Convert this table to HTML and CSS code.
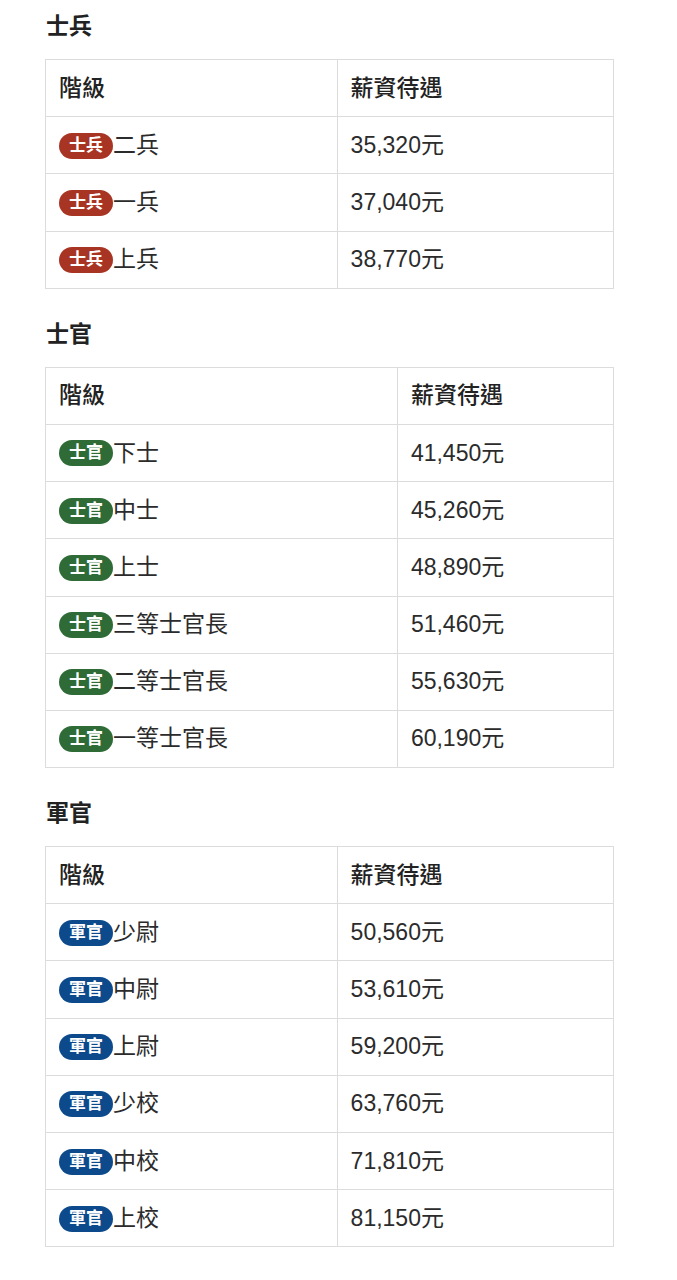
FILE: index.html
```html
<!DOCTYPE html>
<html lang="zh-Hant">
<head>
<meta charset="utf-8">
<title>薪資待遇</title>
<link rel="stylesheet" href="styles.css">
</head>
<body>
<main class="page">
  <section class="group">
    <h2 class="group-title">士兵</h2>
    <table class="pay-table">
      <thead>
        <tr><th>階級</th><th>薪資待遇</th></tr>
      </thead>
      <tbody>
        <tr><td><span class="badge badge-soldier">士兵</span>二兵</td><td>35,320元</td></tr>
        <tr><td><span class="badge badge-soldier">士兵</span>一兵</td><td>37,040元</td></tr>
        <tr><td><span class="badge badge-soldier">士兵</span>上兵</td><td>38,770元</td></tr>
      </tbody>
    </table>
  </section>

  <section class="group">
    <h2 class="group-title">士官</h2>
    <table class="pay-table">
      <thead>
        <tr><th>階級</th><th>薪資待遇</th></tr>
      </thead>
      <tbody>
        <tr><td><span class="badge badge-nco">士官</span>下士</td><td>41,450元</td></tr>
        <tr><td><span class="badge badge-nco">士官</span>中士</td><td>45,260元</td></tr>
        <tr><td><span class="badge badge-nco">士官</span>上士</td><td>48,890元</td></tr>
        <tr><td><span class="badge badge-nco">士官</span>三等士官長</td><td>51,460元</td></tr>
        <tr><td><span class="badge badge-nco">士官</span>二等士官長</td><td>55,630元</td></tr>
        <tr><td><span class="badge badge-nco">士官</span>一等士官長</td><td>60,190元</td></tr>
      </tbody>
    </table>
  </section>

  <section class="group">
    <h2 class="group-title">軍官</h2>
    <table class="pay-table">
      <thead>
        <tr><th>階級</th><th>薪資待遇</th></tr>
      </thead>
      <tbody>
        <tr><td><span class="badge badge-officer">軍官</span>少尉</td><td>50,560元</td></tr>
        <tr><td><span class="badge badge-officer">軍官</span>中尉</td><td>53,610元</td></tr>
        <tr><td><span class="badge badge-officer">軍官</span>上尉</td><td>59,200元</td></tr>
        <tr><td><span class="badge badge-officer">軍官</span>少校</td><td>63,760元</td></tr>
        <tr><td><span class="badge badge-officer">軍官</span>中校</td><td>71,810元</td></tr>
        <tr><td><span class="badge badge-officer">軍官</span>上校</td><td>81,150元</td></tr>
      </tbody>
    </table>
  </section>
</main>
</body>
</html>
```

FILE: styles.css
```css
html, body {
  margin: 0;
  padding: 0;
  background: #ffffff;
}

body {
  font-family: "Liberation Sans", "Noto Sans CJK TC", "Noto Sans", sans-serif;
  color: #2b2b2b;
}

.page {
  width: 569px;
  padding: 9px 0 30px 45px;
  display: flex;
  flex-direction: column;
}

.group {
  display: flex;
  flex-direction: column;
}

.group + .group {
  margin-top: 28px;
}

.group-title {
  margin: 0 0 16px 1px;
  font-size: 23px;
  line-height: 34px;
  font-weight: 700;
  color: #222222;
}

.pay-table {
  width: 100%;
  border-collapse: collapse;
  font-size: 23px;
  line-height: 33px;
}

.pay-table th,
.pay-table td {
  border: 1px solid #dcdcdc;
  padding: 11.6px 13px;
  text-align: left;
  vertical-align: middle;
  white-space: nowrap;
}

.pay-table th {
  font-weight: 500;
  color: #222222;
}

.badge {
  display: inline-block;
  vertical-align: middle;
  position: relative;
  top: -1px;
  height: 26px;
  line-height: 26px;
  padding: 0 10px;
  border-radius: 13px;
  font-size: 17px;
  font-weight: 700;
  color: #ffffff;
}

.badge-soldier {
  background: #a83424;
}

.badge-nco {
  background: #2e6b36;
}

.badge-officer {
  background: #0d4a8c;
}
```
